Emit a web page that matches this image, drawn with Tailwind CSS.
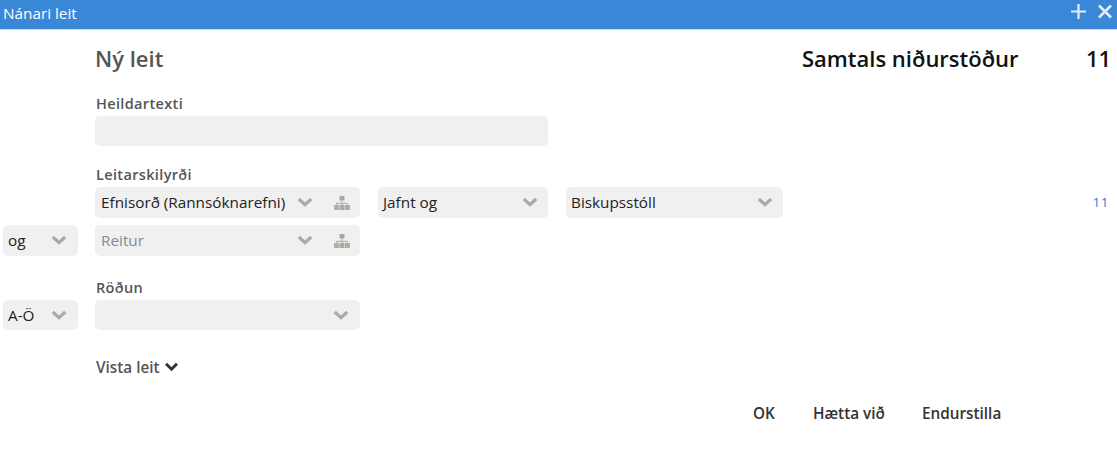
<!DOCTYPE html>
<html lang="is">
<head>
<meta charset="utf-8">
<title>Nánari leit</title>
<script src="https://cdn.jsdelivr.net/npm/@tailwindcss/browser@4"></script>
</head>
<body class="bg-white font-['Open_Sans',sans-serif] overflow-hidden">
<svg class="hidden">
  <symbol id="chev" viewBox="0 0 16 11"><path d="M1.8 2 L8 7.6 L14.2 2" fill="none" stroke="currentColor" stroke-width="3.2"/></symbol>
  <symbol id="tree" viewBox="0 0 16 14"><path d="M7.4 4.5h1.2v2.3h5.200v2.200h-1.200V8H8.600v1H7.400V8H3.200v1H2V6.800h5.400z" fill="#b5b5b5"/><path d="M5.500 0h5v4.500h-5z" fill="#a9a5ae"/><path d="M0 9h5v5H0zM11 9h5v5h-5z" fill="#b8ad9e"/><path d="M5.500 9h5v5h-5z" fill="#aaaaaa"/></symbol>
</svg>
<div class="flex flex-col h-[462px]">
  <header class="h-[29px] bg-[#3a87d8] flex items-start justify-between pl-[3px] pr-[5px] text-white text-[15.3px]">
    <span class="leading-[26px]">Nánari leit</span>
    <div class="flex items-center gap-[12px] mt-[4px] text-[#e4edf7]">
      <svg class="w-[15px] h-[15px]" viewBox="0 0 15 15"><path d="M7.500 0v15M0 7.500h15" stroke="currentColor" stroke-width="2.200" fill="none"/></svg>
      <svg class="w-[14px] h-[15px]" viewBox="0 0 14 15"><path d="M1 1.500l12 12M13 1.500L1 13.500" stroke="currentColor" stroke-width="2.600" fill="none"/></svg>
    </div>
  </header>
  <div class="h-[1px] bg-[#c5dcf3]"></div>

  <main class="flex-1 flex flex-col">
    <div class="flex items-center h-[30px] mt-[13px] pl-[95px] pr-[8px]">
      <h1 class="text-[22px] font-semibold text-[#555555] flex-1">Ný leit</h1>
      <span class="text-[22px] font-semibold text-[#111111] w-[284px]">Samtals niðurstöður</span>
      <span class="text-[22px] font-semibold text-[#111111] w-[23px] text-right">11</span>
    </div>

    <label class="block ml-[96px] mt-[21px] h-[19px] text-[14.5px] leading-[19px] font-semibold text-[#555555] tracking-[0.35px]">Heildartexti</label>
    <div class="ml-[95px] mt-[3px] w-[453px] h-[30px] bg-[#f0f0f0] rounded-[5px]"></div>

    <label class="block ml-[96px] mt-[19px] h-[19px] text-[14.5px] leading-[19px] font-semibold text-[#555555] tracking-[0.35px]">Leitarskilyrði</label>
    <div class="flex items-center ml-[95px] mt-[3px] pr-[8px] h-[31px]">
      <div class="w-[265px] h-[31px] bg-[#f0f0f0] rounded-[5px] flex items-center pl-[6px] text-[15.3px] text-[#222222]">
        <span class="flex-1">Efnisorð (Rannsóknarefni)</span>
        <svg class="w-[16px] h-[11px] text-[#a9a9a9] mr-[21px]"><use href="#chev"/></svg>
        <svg class="w-[16px] h-[14px] mr-[10px]"><use href="#tree"/></svg>
      </div>
      <div class="ml-[18px] w-[170px] h-[31px] bg-[#f0f0f0] rounded-[5px] flex items-center pl-[5px] pr-[10px] text-[15.3px] text-[#222222]">
        <span class="flex-1">Jafnt og</span>
        <svg class="w-[16px] h-[11px] text-[#a9a9a9]"><use href="#chev"/></svg>
      </div>
      <div class="ml-[18px] w-[217px] h-[31px] bg-[#f0f0f0] rounded-[5px] flex items-center pl-[5px] pr-[10px] text-[15.3px] text-[#222222]">
        <span class="flex-1">Biskupsstóll</span>
        <svg class="w-[16px] h-[11px] text-[#a9a9a9]"><use href="#chev"/></svg>
      </div>
      <span class="ml-auto text-[13.5px] text-[#2f80d8] tracking-[0.5px]">11</span>
    </div>

    <div class="flex items-center mt-[7px] pl-[3px] h-[31px]">
      <div class="w-[75px] h-[31px] bg-[#f0f0f0] rounded-[5px] flex items-center pl-[5px] pr-[11px] text-[15.3px] text-[#222222]">
        <span class="flex-1">og</span>
        <svg class="w-[16px] h-[11px] text-[#a9a9a9]"><use href="#chev"/></svg>
      </div>
      <div class="ml-[17px] w-[265px] h-[31px] bg-[#f0f0f0] rounded-[5px] flex items-center pl-[6px] text-[15.3px] text-[#8a8a8a]">
        <span class="flex-1">Reitur</span>
        <svg class="w-[16px] h-[11px] text-[#a9a9a9] mr-[21px]"><use href="#chev"/></svg>
        <svg class="w-[16px] h-[14px] mr-[10px]"><use href="#tree"/></svg>
      </div>
    </div>

    <label class="block ml-[96px] mt-[22px] h-[19px] text-[14.5px] leading-[19px] font-semibold text-[#555555] tracking-[0.35px]">Röðun</label>
    <div class="flex items-center mt-[3px] pl-[3px] h-[30px]">
      <div class="w-[75px] h-[30px] bg-[#f0f0f0] rounded-[5px] flex items-center pl-[5px] pr-[11px] text-[15.3px] text-[#222222]">
        <span class="flex-1">A-Ö</span>
        <svg class="w-[16px] h-[11px] text-[#a9a9a9]"><use href="#chev"/></svg>
      </div>
      <div class="ml-[17px] w-[265px] h-[30px] bg-[#f0f0f0] rounded-[5px] flex items-center justify-end pr-[11px]">
        <svg class="w-[16px] h-[11px] text-[#a9a9a9]"><use href="#chev"/></svg>
      </div>
    </div>

    <div class="flex items-center gap-[4px] ml-[96px] mt-[27px] h-[20px] text-[15.3px] font-semibold text-[#555555]">
      <span>Vista leit</span>
      <svg class="w-[15px] h-[10px] text-[#333333]" viewBox="0 0 16 11"><path d="M2 2 L8 8 L14 2" fill="none" stroke="currentColor" stroke-width="3.200"/></svg>
    </div>

    <div class="flex items-center mt-[26px] h-[20px] ml-[753px] text-[15.3px] font-semibold text-[#333333]">
      <button class="font-semibold w-[60px] text-left">OK</button>
      <button class="font-semibold w-[109px] text-left">Hætta við</button>
      <button class="font-semibold">Endurstilla</button>
    </div>
  </main>
</div>
</body>
</html>
